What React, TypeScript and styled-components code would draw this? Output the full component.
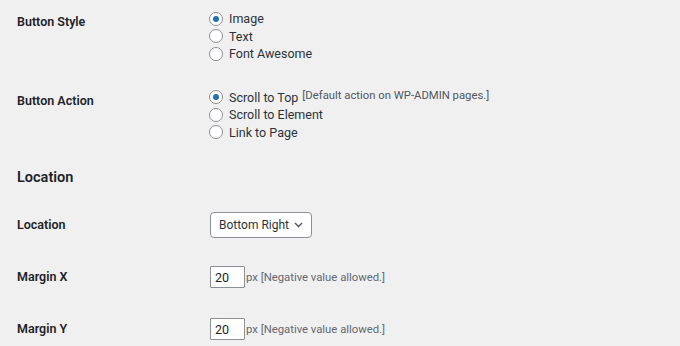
import React from 'react';
import styled, { createGlobalStyle } from 'styled-components';

const wpColors = {
  bg: '#f0f0f1',
  heading: '#1d2327',
  text: '#2c3338',
  muted: '#646970',
  border: '#8c8f94',
  blue: '#2271b1'
};

const GlobalStyle = createGlobalStyle`
  html, body {
    margin: 0;
    padding: 0;
    background: ${wpColors.bg};
    font-family: Roboto, "Noto Sans", sans-serif;
    font-size: 12.5px;
    color: ${wpColors.text};
  }
`;

const Page = styled.div`
  width: 680px;
  height: 346px;
  overflow: hidden;
  padding-left: 17px;
  box-sizing: border-box;
`;

const Row = styled.div<{ $top?: number; $bottom?: number; $center?: boolean }>`
  display: grid;
  grid-template-columns: 193px 1fr;
  align-items: ${({ $center }) => ($center ? 'center' : 'start')};
  padding-top: ${({ $top }) => $top ?? 0}px;
  padding-bottom: ${({ $bottom }) => $bottom ?? 0}px;
  min-height: ${({ $center }) => ($center ? '52px' : 'auto')};
`;

const Label = styled.div<{ $offset?: number }>`
  font-weight: 600;
  font-size: 12.5px;
  line-height: 18px;
  color: ${wpColors.heading};
  padding-top: ${({ $offset }) => $offset ?? 0}px;
`;

const Fieldset = styled.div`
  display: flex;
  flex-direction: column;
`;

const Option = styled.label`
  display: flex;
  align-items: center;
  height: 17.5px;
  line-height: 17.5px;
  font-size: 12.5px;
  color: ${wpColors.text};
  white-space: nowrap;
`;

const Radio = styled.input.attrs({ type: 'radio' })`
  appearance: none;
  width: 14px;
  height: 14px;
  margin: 0 6px 0 -1px;
  border: 1px solid ${wpColors.border};
  border-radius: 50%;
  background: #fff;
  box-sizing: border-box;
  display: inline-grid;
  place-items: center;

  &:checked::before {
    content: '';
    width: 6px;
    height: 6px;
    border-radius: 50%;
    background: ${wpColors.blue};
  }
`;

const Hint = styled.span<{ $raised?: boolean }>`
  font-size: 11.3px;
  color: ${({ $raised }) => ($raised ? '#50575e' : wpColors.muted)};
  margin-left: ${({ $raised }) => ($raised ? '4px' : '1px')};
  align-self: ${({ $raised }) => ($raised ? 'flex-start' : 'center')};
  line-height: ${({ $raised }) => ($raised ? '14px' : 'normal')};
`;

const SectionTitle = styled.h2`
  margin: 27px 0 11px;
  font-size: 14.5px;
  line-height: 20px;
  font-weight: 600;
  color: ${wpColors.heading};
`;

const Select = styled.div`
  display: inline-flex;
  align-items: center;
  justify-content: space-between;
  width: 102px;
  height: 26px;
  box-sizing: border-box;
  padding: 0 8px;
  background: #fff;
  border: 1px solid ${wpColors.border};
  border-radius: 4px;
  font-size: 12px;
  color: ${wpColors.text};
  white-space: nowrap;
`;

const InputLine = styled.div`
  display: flex;
  align-items: center;
`;

const NumberInput = styled.input`
  width: 35px;
  height: 22px;
  box-sizing: border-box;
  margin: 0;
  padding: 0 4px;
  border: 1px solid ${wpColors.border};
  border-radius: 1px;
  background: #fff;
  font-family: inherit;
  font-size: 12.5px;
  color: ${wpColors.heading};
`;

const Chevron = () => (
  <svg width="9" height="6" viewBox="0 0 9 6">
    <polyline points="1,1 4.5,4.5 8,1" fill="none" stroke="#50575e" strokeWidth="1.4" />
  </svg>
);

const App = () => (
  <Page>
    <GlobalStyle />
    <Row $top={10} $bottom={16}>
      <Label $offset={3}>Button Style</Label>
      <Fieldset>
        <Option><Radio name="style" defaultChecked />Image</Option>
        <Option><Radio name="style" />Text</Option>
        <Option><Radio name="style" />Font Awesome</Option>
      </Fieldset>
    </Row>
    <Row $top={10}>
      <Label $offset={3}>Button Action</Label>
      <Fieldset>
        <Option>
          <Radio name="action" defaultChecked />Scroll to Top
          <Hint $raised>[Default action on WP-ADMIN pages.]</Hint>
        </Option>
        <Option><Radio name="action" />Scroll to Element</Option>
        <Option><Radio name="action" />Link to Page</Option>
      </Fieldset>
    </Row>
    <SectionTitle>Location</SectionTitle>
    <Row $center>
      <Label>Location</Label>
      <div>
        <Select>Bottom Right <Chevron /></Select>
      </div>
    </Row>
    <Row $center>
      <Label>Margin X</Label>
      <InputLine>
        <NumberInput defaultValue="20" />
        <Hint>px [Negative value allowed.]</Hint>
      </InputLine>
    </Row>
    <Row $center>
      <Label>Margin Y</Label>
      <InputLine>
        <NumberInput defaultValue="20" />
        <Hint>px [Negative value allowed.]</Hint>
      </InputLine>
    </Row>
  </Page>
);

export default App;
